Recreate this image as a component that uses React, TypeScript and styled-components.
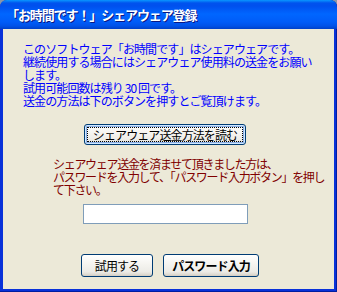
import React from "react";
import styled, { createGlobalStyle } from "styled-components";

const Global = createGlobalStyle`
  html, body { margin: 0; padding: 0; background: #8a96a8; }
  body { font-family: "Noto Sans CJK JP", "Noto Sans", sans-serif; }
`;

const Window = styled.div`
  width: 337px;
  height: 292px;
  display: flex;
  flex-direction: column;
  border-radius: 7px 7px 0 0;
  background: #0831d9;
  box-shadow: inset 0 -1px 0 #001ea0, inset -1px 0 0 #001ea0;
  overflow: hidden;
`;

const TitleBar = styled.div`
  height: 29px;
  flex: none;
  display: flex;
  align-items: center;
  padding-left: 6px;
  background: linear-gradient(
    to bottom,
    #0997ff 0px,
    #0053ee 3px,
    #0050ee 6px,
    #0066ff 14px,
    #005cf8 22px,
    #0052e8 26px,
    #0040c8 29px
  );
`;

const Title = styled.span`
  color: #ffffff;
  font-weight: bold;
  font-size: 13px;
  letter-spacing: -1.1px;
  text-shadow: 1px 1px 0 #0a1883;
  margin-top: -1px;
`;

const Client = styled.div`
  flex: 1;
  margin: 0 3px 3px 3px;
  background: #ece9d8;
  display: flex;
  flex-direction: column;
  align-items: flex-start;
`;

const Message = styled.p<{ $color: string; $left: number; $top: number; $spacing: number }>`
  margin: ${(p) => p.$top}px 0 0 ${(p) => p.$left}px;
  color: ${(p) => p.$color};
  font-size: 12px;
  line-height: 13px;
  letter-spacing: ${(p) => p.$spacing}px;
  white-space: nowrap;
`;

const Line = styled.span`
  display: block;
  height: 13px;
`;

const XPButton = styled.button<{ $width: number; $height: number; $bold?: boolean; $focused?: boolean }>`
  box-sizing: border-box;
  width: ${(p) => p.$width}px;
  height: ${(p) => p.$height}px;
  padding: 0;
  border: 1px solid #003c74;
  border-radius: 3px;
  background: linear-gradient(to bottom, #ffffff 0%, #f6f5f1 40%, #ecebe6 80%, #d6d0c5 100%);
  font-family: "Noto Sans CJK JP", "Noto Sans", sans-serif;
  font-size: 12px;
  font-weight: ${(p) => (p.$bold ? "bold" : "normal")};
  letter-spacing: -0.9px;
  color: #000000;
  position: relative;
  box-shadow: ${(p) =>
    p.$focused
      ? "inset 0 0 0 1px #cee7ff, inset 0 0 0 2px #89ade4"
      : "inset 0 -1px 0 #d6d0c5"};
  display: flex;
  align-items: center;
  justify-content: center;
  &::after {
    content: "";
    display: ${(p) => (p.$focused ? "block" : "none")};
    position: absolute;
    inset: 2px;
    border: 1px dotted #000000;
  }
`;

const ButtonSlot = styled.div`
  margin: 17px 0 0 81px;
`;

const PasswordInput = styled.input`
  box-sizing: border-box;
  margin: 8px 0 0 80px;
  width: 165px;
  height: 20px;
  border: 1px solid #7f9db9;
  background: #ffffff;
  outline: none;
  padding: 0 3px;
`;

const ButtonRow = styled.div`
  display: flex;
  gap: 10px;
  margin: 30px 0 0 78px;
`;

export default function App() {
  return (
    <>
      <Global />
      <Window>
        <TitleBar>
          <Title>「お時間です！」シェアウェア登録</Title>
        </TitleBar>
        <Client>
          <Message $color="#0000ff" $left={20} $top={13} $spacing={-0.9}>
            <Line>このソフトウェア「お時間です」はシェアウェアです。</Line>
            <Line>継続使用する場合にはシェアウェア使用料の送金をお願い</Line>
            <Line>します。</Line>
            <Line>試用可能回数は残り&nbsp;30&nbsp;回です。</Line>
            <Line>送金の方法は下のボタンを押すとご覧頂けます。</Line>
          </Message>
          <ButtonSlot>
            <XPButton $width={162} $height={21} $focused>
              シェアウェア送金方法を読む
            </XPButton>
          </ButtonSlot>
          <Message $color="#800000" $left={50} $top={12} $spacing={-1.3}>
            <Line>シェアウェア送金を済ませて頂きました方は、</Line>
            <Line>パスワードを入力して、「パスワード入力ボタン」を押し</Line>
            <Line>て下さい。</Line>
          </Message>
          <PasswordInput type="password" />
          <ButtonRow>
            <XPButton $width={72} $height={23}>試用する</XPButton>
            <XPButton $width={96} $height={23} $bold>パスワード入力</XPButton>
          </ButtonRow>
        </Client>
      </Window>
    </>
  );
}
